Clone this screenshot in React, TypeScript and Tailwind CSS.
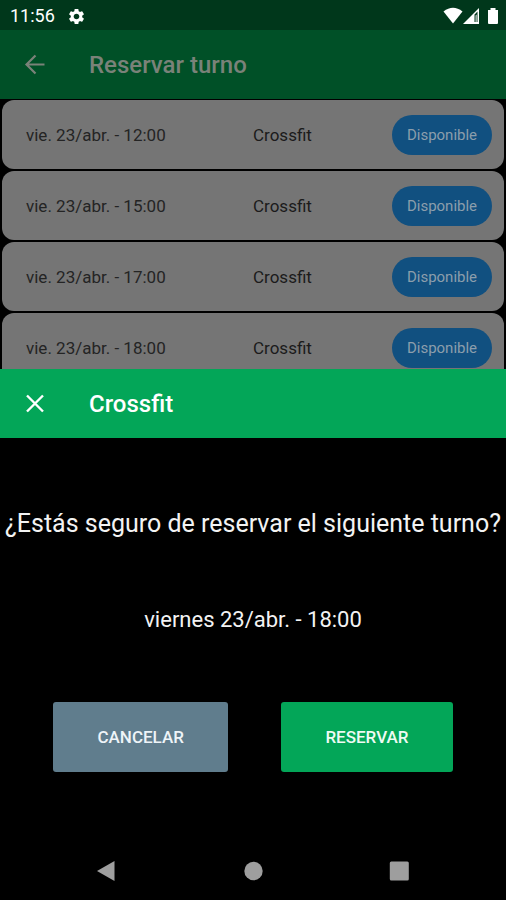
import { MdSettings } from "react-icons/md";

type Slot = { date: string; activity: string; status: string };

const slots: Slot[] = [
  { date: "vie. 23/abr. - 12:00", activity: "Crossfit", status: "Disponible" },
  { date: "vie. 23/abr. - 15:00", activity: "Crossfit", status: "Disponible" },
  { date: "vie. 23/abr. - 17:00", activity: "Crossfit", status: "Disponible" },
  { date: "vie. 23/abr. - 18:00", activity: "Crossfit", status: "Disponible" },
];

function StatusBar() {
  return (
    <div className="flex h-[30px] shrink-0 items-center justify-between bg-[#00371b] pt-[2px] pr-[7px] pl-[10px] text-white">
      <div className="flex items-center gap-3">
        <span className="text-[18px] leading-6">11:56</span>
        <MdSettings size={19} aria-hidden="true" />
      </div>
      <svg width="56" height="18" viewBox="0 0 56 18" fill="currentColor" aria-hidden="true">
        <path d="M0.5 4.5Q10 -3 19.5 4.5L10 16.5Z" />
        <path fillRule="evenodd" d="M20 17L36 1V17ZM31.5 7.5V15H34.5V4.5ZM32.6 8.5L33.6 7.5V15H32.6Z" />
        <path d="M47.5 1h5v2h2.5v13q0 1-1 1h-8q-1 0-1-1V3h2.5Z" />
      </svg>
    </div>
  );
}

function SlotRow({ slot }: { slot: Slot }) {
  return (
    <li className="flex h-[69px] shrink-0 items-center rounded-xl bg-[#757575]">
      <span className="w-1/2 pl-6 text-[17px] leading-6 text-[#242424]">{slot.date}</span>
      <span className="flex w-1/2 items-center justify-between pr-3">
        <span className="text-[17px] leading-6 text-[#1b1b1b]">{slot.activity}</span>
        <button
          type="button"
          className="h-10 w-[100px] rounded-full bg-[#115080] text-[15px] leading-5 text-[#8b9eac]"
        >
          {slot.status}
        </button>
      </span>
    </li>
  );
}

function ConfirmSheet() {
  return (
    <section role="dialog" aria-labelledby="sheet-title" className="shrink-0 bg-black text-white">
      <header className="flex h-[69px] items-center gap-[41px] bg-[#03a658] pl-[22px]">
        <button type="button" aria-label="Cerrar" className="size-[26px]">
          <svg width="26" height="26" viewBox="0 0 26 26" stroke="currentColor" strokeWidth="2.4" fill="none">
            <path d="M5 4.5L21 20.5M21 4.5L5 20.5" />
          </svg>
        </button>
        <h2 id="sheet-title" className="text-[24px] leading-8 font-medium">
          Crossfit
        </h2>
      </header>
      <div className="flex flex-col items-center py-[70px]">
        <p className="text-center text-[25px] leading-8 text-[#f3f3f3]">
          ¿Estás seguro de reservar el siguiente turno?
        </p>
        <p className="pt-16 text-center text-[22px] leading-8 text-[#f3f3f3]">viernes 23/abr. - 18:00</p>
        <div className="flex w-full justify-evenly pt-[66px]">
          <button
            type="button"
            className="h-[70px] rounded-[3px] bg-[#607d8d] px-11 text-[17px] leading-6 font-medium text-[#eef4f8]"
          >
            CANCELAR
          </button>
          <button
            type="button"
            className="h-[70px] rounded-[3px] bg-[#03a658] px-11 text-[17px] leading-6 font-medium text-[#eefbf3]"
          >
            RESERVAR
          </button>
        </div>
      </div>
    </section>
  );
}

function NavigationBar() {
  return (
    <nav className="flex h-[58px] shrink-0 items-center justify-center gap-[126px] bg-black text-[#9e9e9e]">
      <button type="button" aria-label="Atrás">
        <svg width="20" height="22" viewBox="0 0 20 22" fill="currentColor">
          <path d="M17.5 1V21L0 11Z" />
        </svg>
      </button>
      <button type="button" aria-label="Inicio">
        <svg width="20" height="22" viewBox="0 0 20 22" fill="currentColor">
          <circle cx="10.5" cy="11" r="9.2" />
        </svg>
      </button>
      <button type="button" aria-label="Recientes">
        <svg width="20" height="22" viewBox="0 0 20 22" fill="currentColor">
          <rect x="0.8" y="1.5" width="19" height="19" rx="1.5" />
        </svg>
      </button>
    </nav>
  );
}

export default function App() {
  return (
    <div className="flex h-screen flex-col overflow-hidden bg-black font-['Roboto',sans-serif]">
      <StatusBar />
      <header className="flex h-[69px] shrink-0 items-center gap-[41px] bg-[#005027] pl-[22px] text-[#7a8279]">
        <button type="button" aria-label="Volver" className="size-[26px]">
          <svg width="26" height="26" viewBox="0 0 26 26" stroke="currentColor" strokeWidth="2.2" fill="none">
            <path d="M22.5 12.5H5M13.5 3.5L4.5 12.5L13.5 21.5" />
          </svg>
        </button>
        <h1 className="text-[24px] leading-8 font-medium">Reservar turno</h1>
      </header>
      <ul className="flex min-h-0 flex-1 flex-col gap-[2px] overflow-hidden px-[2px] pt-px">
        {slots.map((slot) => (
          <SlotRow key={slot.date} slot={slot} />
        ))}
      </ul>
      <ConfirmSheet />
      <NavigationBar />
    </div>
  );
}
